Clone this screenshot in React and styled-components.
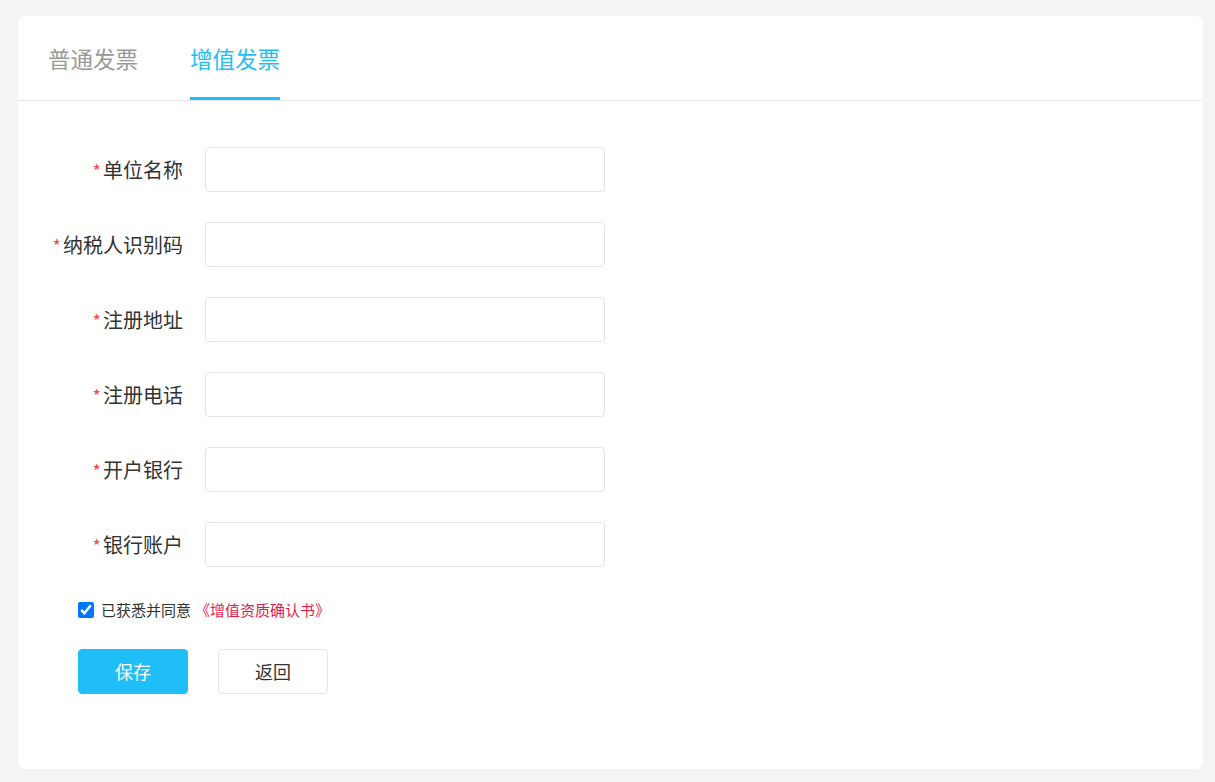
import styled, { createGlobalStyle } from 'styled-components'

const GlobalStyle = createGlobalStyle`
  html, body {
    margin: 0;
    padding: 0;
    background: #f4f4f4;
    font-family: "Noto Sans CJK SC", "Noto Sans", sans-serif;
  }
`;

const fields = ['单位名称', '纳税人识别码', '注册地址', '注册电话', '开户银行', '银行账户'];

function App() {
  return (
    <>
      <GlobalStyle />
      <Page>
        <Card>
          <Tabs>
            <Tab>普通发票</Tab>
            <Tab active>增值发票</Tab>
          </Tabs>
          <Form>
            {fields.map((f) => (
              <Row key={f}>
                <Label>
                  <Star>*</Star>
                  {f}
                </Label>
                <Input />
              </Row>
            ))}
            <Agree>
              <Check type="checkbox" defaultChecked />
              <span>已获悉并同意</span>
              <Link>《增值资质确认书》</Link>
            </Agree>
            <Buttons>
              <Button primary>保存</Button>
              <Button>返回</Button>
            </Buttons>
          </Form>
        </Card>
      </Page>
    </>
  );
}

export default App

const Page = styled.div`
  padding: 16px 12px 13px 18px;
  height: 782px;
  box-sizing: border-box;
`;

const Card = styled.div`
  background: #fff;
  border-radius: 8px;
  height: 753px;
  overflow: hidden;
`;

const Tabs = styled.div`
  display: flex;
  height: 84px;
  padding-left: 30px;
  border-bottom: 1px solid #e6e6e6;
  gap: 52px;
`;

const Tab = styled.div`
  font-size: 22.5px;
  line-height: 84px;
  height: 84px;
  box-sizing: border-box;
  color: ${(p) => (p.active ? '#1fbef5' : '#999')};
  border-bottom: 3px solid ${(p) => (p.active ? '#1fbef5' : 'transparent')};
`;

const Form = styled.div`
  padding-top: 46px;
  display: flex;
  flex-direction: column;
`;

const Row = styled.div`
  display: flex;
  align-items: center;
  height: 45px;
  margin-bottom: 30px;
`;

const Label = styled.div`
  width: 165px;
  margin-right: 22px;
  text-align: right;
  font-size: 20px;
  color: #333;
`;

const Star = styled.span`
  color: #f04848;
  font-size: 18px;
  margin-right: 2px;
`;

const Input = styled.input`
  width: 400px;
  height: 45px;
  box-sizing: border-box;
  border: 1px solid #e4e4e4;
  border-radius: 4px;
  outline: none;
`;

const Agree = styled.label`
  display: flex;
  align-items: center;
  margin: 4px 0 0 60px;
  font-size: 15px;
  color: #333;
  height: 17px;
`;

const Check = styled.input`
  width: 16px;
  height: 16px;
  margin: 0 7px 0 0;
`;

const Link = styled.span`
  color: #e8194a;
  margin-left: 4px;
`;

const Buttons = styled.div`
  display: flex;
  gap: 30px;
  margin: 31px 0 0 60px;
`;

const Button = styled.button`
  width: 110px;
  height: 45px;
  padding: 0 0 2px;
  line-height: 1;
  border-radius: 4px;
  font-family: inherit;
  font-size: 18px;
  cursor: pointer;
  background: ${(p) => (p.primary ? '#1fbef9' : '#fff')};
  color: ${(p) => (p.primary ? '#fff' : '#333')};
  border: 1px solid ${(p) => (p.primary ? '#1fbef9' : '#e4e4e4')};
`;
